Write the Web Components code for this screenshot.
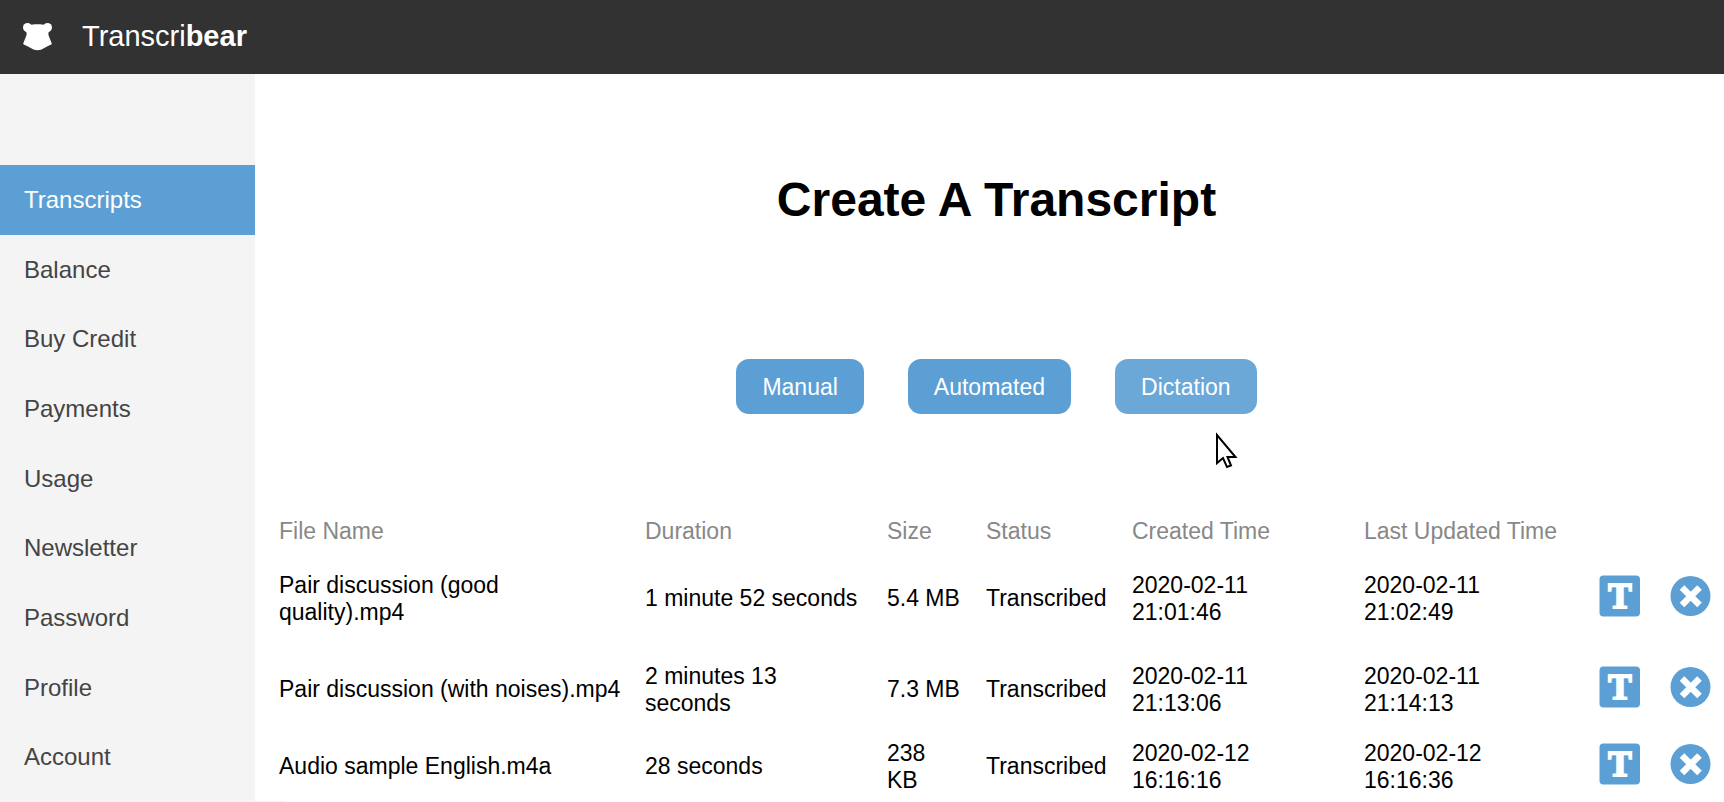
<!DOCTYPE html>
<html lang="en">
<head>
  <meta charset="UTF-8">
  <meta name="viewport" content="width=device-width, initial-scale=1.0">
  <title>Transcribear</title>
  <style>
    body {
      margin: 0;
      background: #fff;
      color: #000;
      font-family: "Liberation Sans", Arial, sans-serif;
      --blue: #5c9fd4;
      --blue-light: #6ba8d8;
      --dark: #323232;
      --side: #f4f4f4;
    }
  </style>
</head>
<body>
  <bear-app>
    <bear-header slot="header"></bear-header>
    <bear-sidebar slot="sidebar"></bear-sidebar>
    <h1 slot="title">Create A Transcript</h1>
    <bear-button slot="actions">Manual</bear-button>
    <bear-button slot="actions">Automated</bear-button>
    <bear-button slot="actions" active>Dictation</bear-button>
    <transcript-table></transcript-table>
  </bear-app>
  <mouse-pointer></mouse-pointer>

  <script>
    class BearApp extends HTMLElement {
      connectedCallback() {
        this.attachShadow({ mode: 'open' });
        this.shadowRoot.innerHTML = `
          <style>
            :host {
              display: flex;
              flex-direction: column;
              height: 100vh;
              overflow: hidden;
            }
            .body {
              flex: 1;
              min-height: 0;
              display: grid;
              grid-template-columns: 255px 1fr;
            }
            main {
              padding: 98px 0 0 14px;
              min-width: 0;
              min-height: 0;
            }
            ::slotted(h1) {
              margin: 0;
              font-size: 48px;
              line-height: 56px;
              text-align: center;
            }
            .actions {
              display: flex;
              justify-content: center;
              gap: 40px;
              margin: 129px 0 101px;
            }
            .status {
              position: fixed;
              left: 0;
              bottom: 0;
              width: 285px;
              height: 1px;
              background: var(--side);
            }
          </style>
          <slot name="header"></slot>
          <div class="body">
            <slot name="sidebar"></slot>
            <main>
              <slot name="title"></slot>
              <div class="actions"><slot name="actions"></slot></div>
              <slot></slot>
            </main>
          </div>
          <div class="status"></div>
        `;
      }
    }

    class BearHeader extends HTMLElement {
      connectedCallback() {
        this.attachShadow({ mode: 'open' });
        this.shadowRoot.innerHTML = `
          <style>
            :host { display: block; }
            header {
              height: 74px;
              box-sizing: border-box;
              padding: 0 22px 2px;
              background: var(--dark);
            }
            a {
              display: flex;
              align-items: center;
              gap: 29px;
              height: 100%;
              color: #fff;
              font-size: 29px;
              text-decoration: none;
            }
            svg { display: block; }
          </style>
          <header>
            <a href="#">
              <svg width="31" height="30" viewBox="0 0 31 30" fill="#fff" aria-hidden="true">
                <circle cx="5.500" cy="6.500" r="4.500"/>
                <circle cx="25.500" cy="6.500" r="4.500"/>
                <path d="M7 4.500C11 2.800 20 2.800 24 4.500L28 9.500C26 11 26 13 27 15.500L29.800 22.500C29.800 23.500 28.500 24 26 25L19.500 28.500C17 29.500 14 29.500 11.500 28.500L5 25C2.500 24 1.200 23.500 1.200 22.500L4 15.500C5 13 5 11 3 9.500Z"/>
              </svg>
              <span>Transcri<b>bear</b></span>
            </a>
          </header>
        `;
      }
    }

    class BearSidebar extends HTMLElement {
      connectedCallback() {
        const items = ['Transcripts', 'Balance', 'Buy Credit', 'Payments', 'Usage',
          'Newsletter', 'Password', 'Profile', 'Account'];
        this.attachShadow({ mode: 'open' });
        this.shadowRoot.innerHTML = `
          <style>
            :host { display: block; background: var(--side); }
            nav {
              display: flex;
              flex-direction: column;
              height: 100%;
              box-sizing: border-box;
              padding: 91px 0 10px;
            }
            a {
              flex: 1;
              display: flex;
              align-items: center;
              padding: 0 24px;
              color: #444;
              font-size: 24px;
              text-decoration: none;
            }
            a.active { background: var(--blue); color: #fff; }
          </style>
          <nav>
            ${items.map((item, i) => `<a href="#"${i === 0 ? ' class="active"' : ''}>${item}</a>`).join('')}
          </nav>
        `;
      }
    }

    class BearButton extends HTMLElement {
      connectedCallback() {
        this.attachShadow({ mode: 'open' });
        this.shadowRoot.innerHTML = `
          <style>
            :host { display: block; }
            button {
              display: block;
              height: 59px;
              padding: 2px 26px 0;
              border: 2px solid #fff;
              border-radius: 15px;
              background: var(--blue);
              color: #fff;
              font-family: inherit;
              font-size: 23px;
            }
            button:hover, :host([active]) button { background: var(--blue-light); }
          </style>
          <button type="button"><slot></slot></button>
        `;
      }
    }

    class TranscriptTable extends HTMLElement {
      connectedCallback() {
        const columns = [366, 242, 99, 146, 232, 235, 71, 54];
        const heads = ['File Name', 'Duration', 'Size', 'Status', 'Created Time', 'Last Updated Time'];
        const rows = [
          ['Pair discussion (good quality).mp4', '1 minute 52 seconds', '5.4 MB', 'Transcribed', '2020-02-11 21:01:46', '2020-02-11 21:02:49'],
          ['Pair discussion (with noises).mp4', '2 minutes 13 seconds', '7.3 MB', 'Transcribed', '2020-02-11 21:13:06', '2020-02-11 21:14:13'],
          ['Audio sample English.m4a', '28 seconds', '238 KB', 'Transcribed', '2020-02-12 16:16:16', '2020-02-12 16:16:36']
        ];
        this.attachShadow({ mode: 'open' });
        this.shadowRoot.innerHTML = `
          <style>
            :host { display: block; padding-left: 10px; }
            table {
              width: 100%;
              table-layout: fixed;
              border-collapse: collapse;
              font-size: 23px;
              line-height: 27px;
            }
            th, td {
              box-sizing: border-box;
              padding: 0 24px 0 0;
              text-align: left;
              vertical-align: middle;
            }
            th {
              color: #888;
              font-weight: normal;
            }
            thead tr { height: 29px; }
            tbody tr { height: 77px; }
            tbody tr:first-child { height: 105px; }
            td.icon { padding: 0 0 6px; }
          </style>
          <table>
            <colgroup>${columns.map(w => `<col style="width: ${w}px">`).join('')}</colgroup>
            <thead>
              <tr>${heads.map(h => `<th>${h}</th>`).join('')}<td></td><td></td></tr>
            </thead>
            <tbody>
              ${rows.map(row => `
                <tr>
                  ${row.map(cell => `<td>${cell}</td>`).join('')}
                  <td class="icon"><icon-button kind="edit"></icon-button></td>
                  <td class="icon"><icon-button kind="remove"></icon-button></td>
                </tr>`).join('')}
            </tbody>
          </table>
        `;
      }
    }

    class IconButton extends HTMLElement {
      connectedCallback() {
        const edit = this.getAttribute('kind') === 'edit';
        this.attachShadow({ mode: 'open' });
        this.shadowRoot.innerHTML = `
          <style>
            :host { display: block; }
            button {
              display: block;
              padding: 0;
              border: 0;
              background: none;
            }
            svg { display: block; fill: var(--blue); }
            text {
              fill: #fff;
              stroke: #fff;
              stroke-width: 2;
              font: bold 35px "Liberation Serif", serif;
              text-anchor: middle;
            }
          </style>
          <button type="button" aria-label="${edit ? 'Edit' : 'Delete'}">
            ${edit ? `
              <svg width="42" height="42" viewBox="0 0 42 42">
                <rect x="0.500" y="0.500" width="40.500" height="41" rx="4"/>
                <text x="21" y="33">T</text>
              </svg>` : `
              <svg width="42" height="42" viewBox="0 0 42 42">
                <circle cx="20.500" cy="21" r="20"/>
                <path d="M12 12.500L29.500 30M29.500 12.500L12 30" stroke="#fff" stroke-width="6.500"/>
              </svg>`}
          </button>
        `;
      }
    }

    class MousePointer extends HTMLElement {
      connectedCallback() {
        this.attachShadow({ mode: 'open' });
        this.shadowRoot.innerHTML = `
          <style>
            :host {
              position: absolute;
              left: 1215px;
              top: 430px;
              pointer-events: none;
            }
            svg { display: block; }
          </style>
          <svg width="24" height="40" viewBox="0 0 24 40" aria-hidden="true">
            <path d="M2 5V33L8 28L12 37L16 35.500L12.500 27H20.500Z" fill="#fff" stroke="#000" stroke-width="2"/>
          </svg>
        `;
      }
    }

    customElements.define('bear-app', BearApp);
    customElements.define('bear-header', BearHeader);
    customElements.define('bear-sidebar', BearSidebar);
    customElements.define('bear-button', BearButton);
    customElements.define('icon-button', IconButton);
    customElements.define('transcript-table', TranscriptTable);
    customElements.define('mouse-pointer', MousePointer);
  </script>
</body>
</html>
